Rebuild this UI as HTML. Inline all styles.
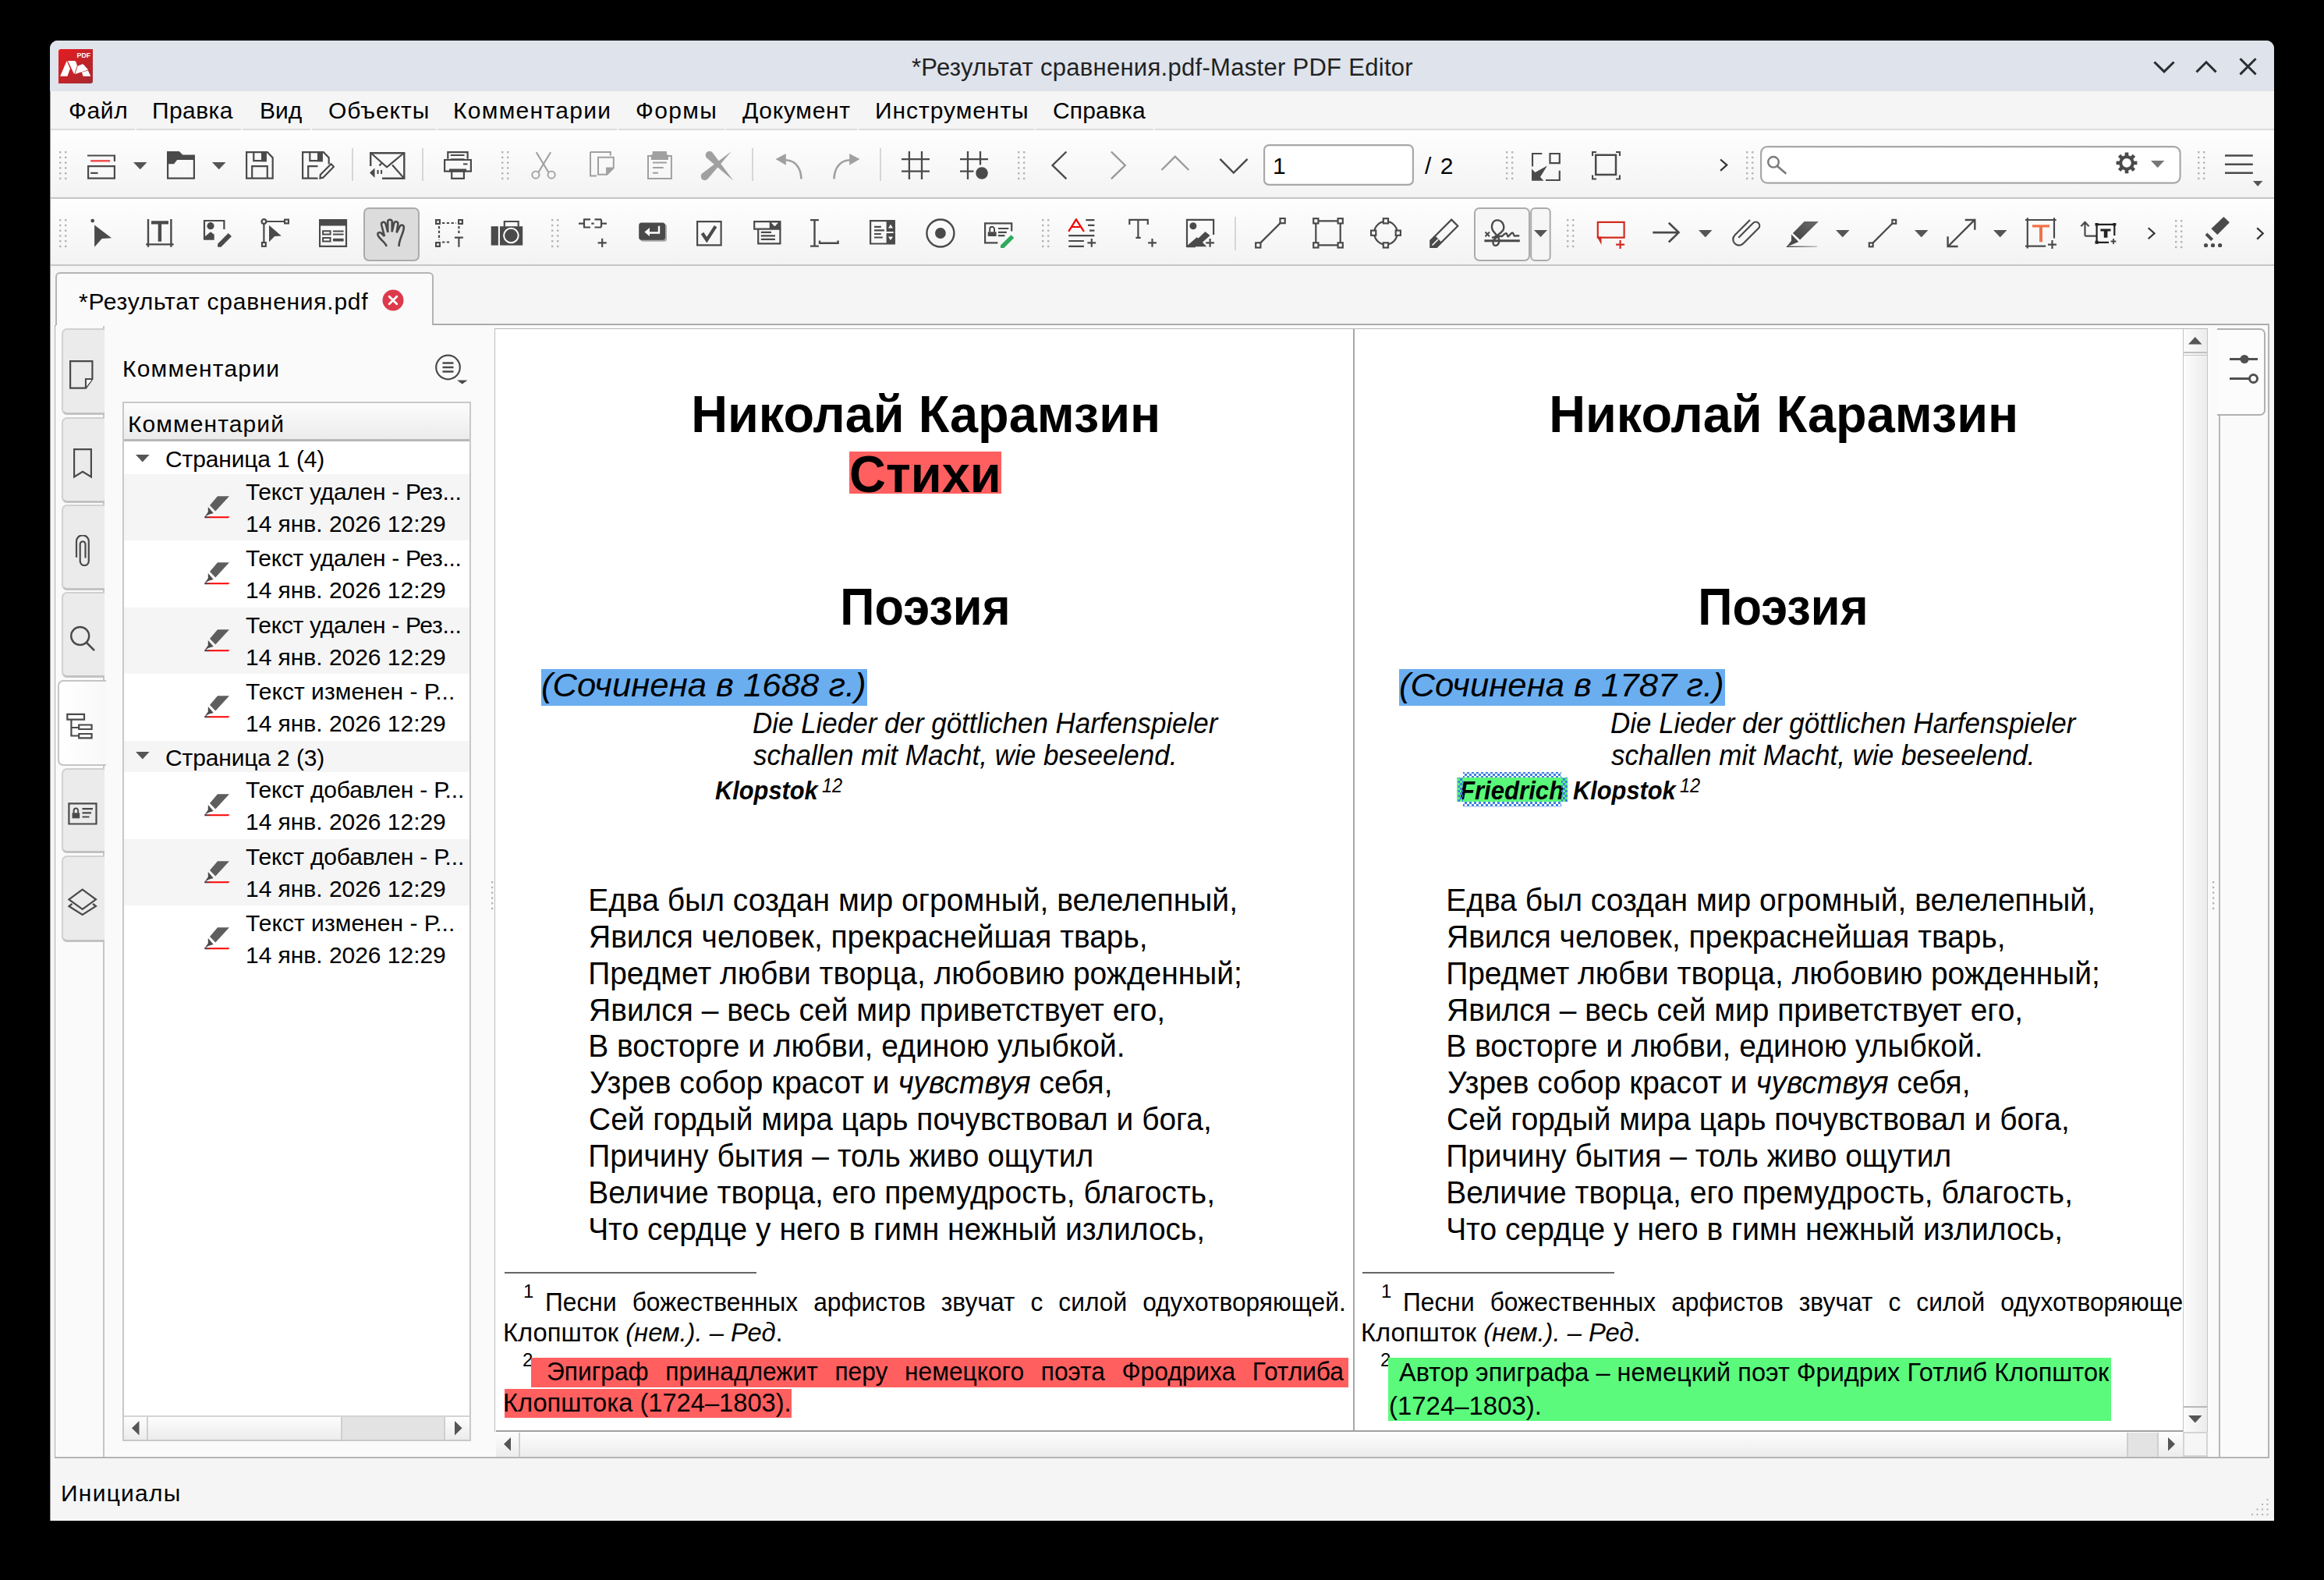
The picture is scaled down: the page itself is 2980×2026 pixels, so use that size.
<!DOCTYPE html><html><head><meta charset="utf-8"><style>
html,body{margin:0;padding:0}
body{width:2980px;height:2026px;background:#000;position:relative;overflow:hidden;font-family:"Liberation Sans",sans-serif}
.a{position:absolute;display:block}
.t{position:absolute;white-space:pre;}
</style></head><body>
<div class="a" style="left:64px;top:52px;width:2852px;height:1898px;background:#f5f5f5;border-radius:10px 10px 0 0;"></div>
<div class="a" style="left:64px;top:52px;width:2852px;height:65px;background:#dee3ec;border-radius:10px 10px 0 0;"></div>
<svg class="a" style="left:75px;top:63px" width="44" height="44" viewBox="0 0 44 44"><defs><linearGradient id="lg" x1="0" y1="0" x2="1" y2="1"><stop offset="0" stop-color="#e61c20"/><stop offset="1" stop-color="#a52a30"/></linearGradient></defs><path d="M3 0H44V41A3 3 0 0 1 41 44H0V3A3 3 0 0 1 3 0Z" fill="url(#lg)"/><text x="41.2" y="11.3" font-family="Liberation Sans" font-weight="700" font-size="8.8" fill="#fff" text-anchor="end">PDF</text><path d="M2.1 34.8L10.4 15.6L10.9 15.6L14.9 25.3L11.4 34.8Z" fill="#fff"/><path d="M11.9 15H20.3Q22 15 22.6 16.8L23.9 21.3L20.4 31.4Q20 31.6 19.7 31.2Z" fill="#fff"/><path d="M24.6 21.8L30.5 19.2Q31.5 19 32.3 20L38.1 26.5L21.2 31.9Z" fill="#fff"/><path d="M30 29.4L37.9 27.6L41.3 34.8H31.5Z" fill="#fff"/></svg>
<div class="t" style="left:1169.0px;top:71px;font-size:31px;line-height:31px;color:#222;letter-spacing:0.293px;">*Результат сравнения.pdf-Master PDF Editor</div>
<svg class="a" style="left:2758px;top:74px" width="140" height="26" viewBox="0 0 140 26"><path d="M5.5 6.5L17 17.8L28.5 6.5" fill="none" stroke="#2a2e33" stroke-width="3" stroke-linecap="square"/><path d="M59.5 17.3L71 5.8L82.5 17.3" fill="none" stroke="#2a2e33" stroke-width="3" stroke-linecap="square"/><path d="M115.5 2.3L133.5 20.3M133.5 2.3L115.5 20.3" fill="none" stroke="#2a2e33" stroke-width="3" stroke-linecap="square"/></svg>
<div class="a" style="left:64px;top:117px;width:2852px;height:50px;background:#f5f5f5;"></div>
<div class="a" style="left:64px;top:165px;width:2852px;height:2px;background:#dcdcdc;"></div>
<div class="a" style="left:173px;top:165px;width:2px;height:2px;background:#f5f5f5;"></div>
<div class="a" style="left:309px;top:165px;width:2px;height:2px;background:#f5f5f5;"></div>
<div class="a" style="left:398px;top:165px;width:2px;height:2px;background:#f5f5f5;"></div>
<div class="a" style="left:559px;top:165px;width:2px;height:2px;background:#f5f5f5;"></div>
<div class="a" style="left:791px;top:165px;width:2px;height:2px;background:#f5f5f5;"></div>
<div class="a" style="left:929px;top:165px;width:2px;height:2px;background:#f5f5f5;"></div>
<div class="a" style="left:1099px;top:165px;width:2px;height:2px;background:#f5f5f5;"></div>
<div class="a" style="left:1326px;top:165px;width:2px;height:2px;background:#f5f5f5;"></div>
<div class="a" style="left:1479px;top:165px;width:2px;height:2px;background:#f5f5f5;"></div>
<div class="t" style="left:88.0px;top:127px;font-size:30px;line-height:30px;letter-spacing:0.667px;">Файл</div>
<div class="t" style="left:195.0px;top:127px;font-size:30px;line-height:30px;letter-spacing:0.400px;">Правка</div>
<div class="t" style="left:333.0px;top:127px;font-size:30px;line-height:30px;">Вид</div>
<div class="t" style="left:421.0px;top:127px;font-size:30px;line-height:30px;letter-spacing:0.917px;">Объекты</div>
<div class="t" style="left:581.0px;top:127px;font-size:30px;line-height:30px;letter-spacing:1.300px;">Комментарии</div>
<div class="t" style="left:815.0px;top:127px;font-size:30px;line-height:30px;letter-spacing:1.375px;">Формы</div>
<div class="t" style="left:952.0px;top:127px;font-size:30px;line-height:30px;letter-spacing:0.714px;">Документ</div>
<div class="t" style="left:1122.0px;top:127px;font-size:30px;line-height:30px;letter-spacing:0.960px;">Инструменты</div>
<div class="t" style="left:1350.0px;top:127px;font-size:30px;line-height:30px;letter-spacing:0.167px;">Справка</div>
<div class="a" style="left:64px;top:167px;width:2852px;height:87px;background:linear-gradient(#fefefe,#f3f3f3);"></div>
<div class="a" style="left:64px;top:253px;width:2852px;height:2px;background:#c6c6c6;"></div>
<div class="a" style="left:64px;top:255px;width:2852px;height:84px;background:linear-gradient(#fefefe,#f3f3f3);"></div>
<div class="a" style="left:64px;top:339px;width:2852px;height:2px;background:#c6c6c6;"></div>
<svg class="a" style="left:75.8px;top:193.8px" width="10" height="38" viewBox="0 0 10 38"><rect x="0" y="0.00" width="2.4" height="2.4" fill="#b4b4b4"/><rect x="7" y="0.00" width="2.4" height="2.4" fill="#b4b4b4"/><rect x="0" y="6.75" width="2.4" height="2.4" fill="#b4b4b4"/><rect x="7" y="6.75" width="2.4" height="2.4" fill="#b4b4b4"/><rect x="0" y="13.50" width="2.4" height="2.4" fill="#b4b4b4"/><rect x="7" y="13.50" width="2.4" height="2.4" fill="#b4b4b4"/><rect x="0" y="20.25" width="2.4" height="2.4" fill="#b4b4b4"/><rect x="7" y="20.25" width="2.4" height="2.4" fill="#b4b4b4"/><rect x="0" y="27.00" width="2.4" height="2.4" fill="#b4b4b4"/><rect x="7" y="27.00" width="2.4" height="2.4" fill="#b4b4b4"/><rect x="0" y="33.75" width="2.4" height="2.4" fill="#b4b4b4"/><rect x="7" y="33.75" width="2.4" height="2.4" fill="#b4b4b4"/></svg>
<svg class="a" style="left:112px;top:194px" width="36" height="36" viewBox="0 0 36 36"><path d="M0 5.5H34.9V13" fill="none" stroke="#4a4a4a" stroke-width="2.2" /><path d="M4.2 12.3H29.2" fill="none" stroke="#f04848" stroke-width="2.4" /><path d="M1.1 19.1H34.9V34.7H1.1Z" fill="none" stroke="#4a4a4a" stroke-width="2.2" /><path d="M4.2 27.9H13.5" fill="none" stroke="#4a4a4a" stroke-width="2.2" /></svg>
<svg class="a" style="left:171px;top:208px" width="17.5" height="9.3" viewBox="0 0 17.5 9.3"><path d="M0 0H17.5L8.75 9.3Z" fill="#555" /></svg>
<svg class="a" style="left:214px;top:194px" width="36" height="36" viewBox="0 0 36 36"><path d="M0 0H15.8L20.3 4.5H36V35.8H0Z M2.2 16.2H9.1L13.2 11.1H33.8V33.6H2.2Z" fill="#4a4a4a" fill-rule="evenodd"/></svg>
<svg class="a" style="left:272px;top:208px" width="17.5" height="9.3" viewBox="0 0 17.5 9.3"><path d="M0 0H17.5L8.75 9.3Z" fill="#555" /></svg>
<svg class="a" style="left:315px;top:194px" width="36" height="36" viewBox="0 0 36 36"><path d="M0 0H28.3L35.8 7.8V35.8H0Z M2.2 2.2H27.4L33.6 8.7V33.6H2.2Z" fill="#4a4a4a" fill-rule="evenodd"/><path d="M10.3 1V12.2H25.7V1" fill="none" stroke="#4a4a4a" stroke-width="2.2" /><path d="M20 1H26.7V13.2H20Z" fill="#4a4a4a" /><path d="M8.2 34.7V19.1H27.8V34.7" fill="none" stroke="#4a4a4a" stroke-width="2.2" /></svg>
<svg class="a" style="left:387px;top:194px" width="42" height="36" viewBox="0 0 42 36"><path d="M0 0H28.3L35.8 7.8V16.5H33.6V8.7L27.4 2.2H2.2V33.6H20.5V35.8H0Z" fill="#4a4a4a" /><path d="M10.3 1V12.2H25.7V1" fill="none" stroke="#4a4a4a" stroke-width="2.2" /><path d="M20 1H26.7V13.2H20Z" fill="#4a4a4a" /><path d="M8.2 34.7V19.1H20.5" fill="none" stroke="#4a4a4a" stroke-width="2.2" /><path d="M23.5 34.5L23.8 30L37.5 16.2L41 19.8L27.3 33.7Z" fill="none" stroke="#4a4a4a" stroke-width="2.2" /></svg>
<svg class="a" style="left:451px;top:190px" width="2" height="42" viewBox="0 0 2 42"><rect x="0" y="0" width="2" height="42" fill="#d6d6d6"/></svg>
<svg class="a" style="left:474px;top:195px" width="46" height="35" viewBox="0 0 46 35"><path d="M1.2 18V1.2H44.3V33.7H16" fill="none" stroke="#4a4a4a" stroke-width="2.4" /><path d="M2 1.5L22 19.3L43.5 1.5" fill="none" stroke="#4a4a4a" stroke-width="2.2" /><path d="M43.5 33L29 16.5" fill="none" stroke="#4a4a4a" stroke-width="2.2" /><path d="M12.5 17.5L15 14.5" fill="none" stroke="#4a4a4a" stroke-width="2.2" /><path d="M0 26.5L6.5 20.5V33Z" fill="#4a4a4a" /><path d="M9.5 23H11.6V28H9.5Z M14 23H16.1V28H14Z" fill="#4a4a4a" /></svg>
<svg class="a" style="left:541px;top:190px" width="2" height="42" viewBox="0 0 2 42"><rect x="0" y="0" width="2" height="42" fill="#d6d6d6"/></svg>
<svg class="a" style="left:569px;top:194px" width="36" height="36" viewBox="0 0 36 36"><path d="M5.3 9.8V1.1H30.6V9.8" fill="none" stroke="#4a4a4a" stroke-width="2.2" /><path d="M8.8 5H26.5" fill="none" stroke="#4a4a4a" stroke-width="2" /><path d="M8.8 9.3H26.5V11.5H8.8Z" fill="#4a4a4a" /><path d="M1.1 11H34.9V25.6H1.1Z" fill="none" stroke="#4a4a4a" stroke-width="2.2" /><path d="M25 16.4H30.5" fill="none" stroke="#4a4a4a" stroke-width="2" /><path d="M7 22.5H29V26.5H7Z" fill="#4a4a4a" /><path d="M10.2 25.5V34.9H25.9V25.5" fill="none" stroke="#4a4a4a" stroke-width="2.2" /></svg>
<svg class="a" style="left:642.8px;top:193.8px" width="10" height="38" viewBox="0 0 10 38"><rect x="0" y="0.00" width="2.4" height="2.4" fill="#b4b4b4"/><rect x="7" y="0.00" width="2.4" height="2.4" fill="#b4b4b4"/><rect x="0" y="6.75" width="2.4" height="2.4" fill="#b4b4b4"/><rect x="7" y="6.75" width="2.4" height="2.4" fill="#b4b4b4"/><rect x="0" y="13.50" width="2.4" height="2.4" fill="#b4b4b4"/><rect x="7" y="13.50" width="2.4" height="2.4" fill="#b4b4b4"/><rect x="0" y="20.25" width="2.4" height="2.4" fill="#b4b4b4"/><rect x="7" y="20.25" width="2.4" height="2.4" fill="#b4b4b4"/><rect x="0" y="27.00" width="2.4" height="2.4" fill="#b4b4b4"/><rect x="7" y="27.00" width="2.4" height="2.4" fill="#b4b4b4"/><rect x="0" y="33.75" width="2.4" height="2.4" fill="#b4b4b4"/><rect x="7" y="33.75" width="2.4" height="2.4" fill="#b4b4b4"/></svg>
<svg class="a" style="left:681px;top:194px" width="32" height="36" viewBox="0 0 32 36"><path d="M6.7 1.2L22.1 26.5M25.1 1.2L9.7 26.5" fill="none" stroke="#a0a0a0" stroke-width="2.1" /><circle cx="5.9" cy="30.2" r="4.6" fill="none" stroke="#a0a0a0" stroke-width="1.9"/><circle cx="26.1" cy="30.2" r="4.6" fill="none" stroke="#a0a0a0" stroke-width="1.9"/></svg>
<svg class="a" style="left:756px;top:194px" width="32" height="36" viewBox="0 0 32 36"><path d="M1 1H26.8V5.5M9 31.4H1V1" fill="none" stroke="#a0a0a0" stroke-width="2" /><path d="M10 6.7H31.8V21.8L22.7 30.8H10Z M12 8.7H29.8V20.8H21.2V28.8H12Z" fill="#a0a0a0" fill-rule="evenodd"/><path d="M21.2 20.8H29.8L21.2 29.2Z" fill="#a0a0a0" /></svg>
<svg class="a" style="left:830px;top:194px" width="32" height="36" viewBox="0 0 32 36"><path d="M1 6H30.9V35H1Z" fill="none" stroke="#a0a0a0" stroke-width="2" /><path d="M6.7 0H24.9V4.3H26.9V10.9H4.9V4.3H6.7Z" fill="#a0a0a0" /><path d="M7 14.5H25M7 21.1H20.7M7 27.7H14" fill="none" stroke="#a0a0a0" stroke-width="2" /></svg>
<svg class="a" style="left:899px;top:194px" width="42" height="38" viewBox="0 0 42 38"><path d="M1.2 28.4L39 0L8.2 35.8A5 5 0 0 1 1.2 28.4Z" fill="#a0a0a0" /><path d="M14.5 1.4L41.5 37.7L7.1 8.4A5 5 0 0 1 14.5 1.4Z" fill="#a0a0a0" /></svg>
<svg class="a" style="left:964px;top:190px" width="2" height="42" viewBox="0 0 2 42"><rect x="0" y="0" width="2" height="42" fill="#d6d6d6"/></svg>
<svg class="a" style="left:994px;top:197px" width="35" height="33" viewBox="0 0 35 33"><path d="M0.5 7.1L13.8 0V14.8Z" fill="#a0a0a0" /><path d="M13.2 8.2C24 8.5 33 16 33.5 32.5" fill="none" stroke="#a0a0a0" stroke-width="2.6" /></svg>
<svg class="a" style="left:1068px;top:197px" width="35" height="33" viewBox="0 0 35 33"><path d="M34.5 7.1L21.2 0V14.8Z" fill="#a0a0a0" /><path d="M21.8 8.2C11 8.5 2 16 1.5 32.5" fill="none" stroke="#a0a0a0" stroke-width="2.6" /></svg>
<svg class="a" style="left:1128px;top:190px" width="2" height="42" viewBox="0 0 2 42"><rect x="0" y="0" width="2" height="42" fill="#d6d6d6"/></svg>
<svg class="a" style="left:1156px;top:194px" width="36" height="36" viewBox="0 0 36 36"><path d="M9.9 0V36M26 0V36M0 10.1H36M0 25.6H36" fill="none" stroke="#4a4a4a" stroke-width="2.3" /></svg>
<svg class="a" style="left:1231px;top:194px" width="36" height="36" viewBox="0 0 36 36"><path d="M10 0V36M26 0V17.5M0 10.1H36M0 25.6H17.5" fill="none" stroke="#4a4a4a" stroke-width="2.3" /><circle cx="28" cy="28" r="7.8" fill="#4a4a4a"/></svg>
<svg class="a" style="left:1304.8px;top:193.8px" width="10" height="38" viewBox="0 0 10 38"><rect x="0" y="0.00" width="2.4" height="2.4" fill="#b4b4b4"/><rect x="7" y="0.00" width="2.4" height="2.4" fill="#b4b4b4"/><rect x="0" y="6.75" width="2.4" height="2.4" fill="#b4b4b4"/><rect x="7" y="6.75" width="2.4" height="2.4" fill="#b4b4b4"/><rect x="0" y="13.50" width="2.4" height="2.4" fill="#b4b4b4"/><rect x="7" y="13.50" width="2.4" height="2.4" fill="#b4b4b4"/><rect x="0" y="20.25" width="2.4" height="2.4" fill="#b4b4b4"/><rect x="7" y="20.25" width="2.4" height="2.4" fill="#b4b4b4"/><rect x="0" y="27.00" width="2.4" height="2.4" fill="#b4b4b4"/><rect x="7" y="27.00" width="2.4" height="2.4" fill="#b4b4b4"/><rect x="0" y="33.75" width="2.4" height="2.4" fill="#b4b4b4"/><rect x="7" y="33.75" width="2.4" height="2.4" fill="#b4b4b4"/></svg>
<svg class="a" style="left:1345px;top:192px" width="26" height="40" viewBox="0 0 26 40"><path d="M22.4 2.5L4.6 20L22.4 37.4" fill="none" stroke="#4a4a4a" stroke-width="2.4" /></svg>
<svg class="a" style="left:1421px;top:192px" width="26" height="40" viewBox="0 0 26 40"><path d="M3.9 2.5L21.7 20L3.9 37.4" fill="none" stroke="#9a9a9a" stroke-width="2.4" /></svg>
<svg class="a" style="left:1486px;top:197px" width="42" height="24" viewBox="0 0 42 24"><path d="M3.5 21L20.8 3.6L38.3 21" fill="none" stroke="#9a9a9a" stroke-width="2.4" /></svg>
<svg class="a" style="left:1561px;top:200px" width="42" height="24" viewBox="0 0 42 24"><path d="M3.4 3.9L20.8 21.5L38.6 3.9" fill="none" stroke="#4a4a4a" stroke-width="2.4" /></svg>
<svg class="a" style="left:1620px;top:185px" width="193" height="53" viewBox="0 0 193 53"><rect x="1.1" y="1.1" width="190.8" height="50.8" rx="6" fill="#fff" stroke="#a8a8a8" stroke-width="2.2"/></svg>
<svg class="a" style="left:1930.8px;top:193.8px" width="10" height="38" viewBox="0 0 10 38"><rect x="0" y="0.00" width="2.4" height="2.4" fill="#b4b4b4"/><rect x="7" y="0.00" width="2.4" height="2.4" fill="#b4b4b4"/><rect x="0" y="6.75" width="2.4" height="2.4" fill="#b4b4b4"/><rect x="7" y="6.75" width="2.4" height="2.4" fill="#b4b4b4"/><rect x="0" y="13.50" width="2.4" height="2.4" fill="#b4b4b4"/><rect x="7" y="13.50" width="2.4" height="2.4" fill="#b4b4b4"/><rect x="0" y="20.25" width="2.4" height="2.4" fill="#b4b4b4"/><rect x="7" y="20.25" width="2.4" height="2.4" fill="#b4b4b4"/><rect x="0" y="27.00" width="2.4" height="2.4" fill="#b4b4b4"/><rect x="7" y="27.00" width="2.4" height="2.4" fill="#b4b4b4"/><rect x="0" y="33.75" width="2.4" height="2.4" fill="#b4b4b4"/><rect x="7" y="33.75" width="2.4" height="2.4" fill="#b4b4b4"/></svg>
<svg class="a" style="left:1964px;top:196px" width="37" height="37" viewBox="0 0 37 37"><path d="M1 17.5V1H13.4" fill="none" stroke="#4a4a4a" stroke-width="2.2" /><path d="M23.5 1H35.8V13.2H23.5Z" fill="none" stroke="#4a4a4a" stroke-width="2.2" /><path d="M18 35H35.8V22.7" fill="none" stroke="#4a4a4a" stroke-width="2.2" /><path d="M0 20.5L4.5 25L20 16.4L11 31L15.5 35.8H0Z" fill="#4a4a4a" /></svg>
<svg class="a" style="left:2041px;top:194px" width="37" height="37" viewBox="0 0 37 37"><path d="M1 6V1H6M31 1H36V6M36 30.5V35.5H31M6 35.5H1V30.5" fill="none" stroke="#4a4a4a" stroke-width="2.2" /><path d="M5.2 4.8H31V30.1H5.2Z" fill="none" stroke="#4a4a4a" stroke-width="2.5" /></svg>
<svg class="a" style="left:2203px;top:202px" width="14" height="20" viewBox="0 0 14 20"><path d="M3.1 2.5L11.3 9.6L3.1 16.9" fill="none" stroke="#333" stroke-width="2.2" /></svg>
<svg class="a" style="left:2238.8px;top:193.8px" width="10" height="38" viewBox="0 0 10 38"><rect x="0" y="0.00" width="2.4" height="2.4" fill="#b4b4b4"/><rect x="7" y="0.00" width="2.4" height="2.4" fill="#b4b4b4"/><rect x="0" y="6.75" width="2.4" height="2.4" fill="#b4b4b4"/><rect x="7" y="6.75" width="2.4" height="2.4" fill="#b4b4b4"/><rect x="0" y="13.50" width="2.4" height="2.4" fill="#b4b4b4"/><rect x="7" y="13.50" width="2.4" height="2.4" fill="#b4b4b4"/><rect x="0" y="20.25" width="2.4" height="2.4" fill="#b4b4b4"/><rect x="7" y="20.25" width="2.4" height="2.4" fill="#b4b4b4"/><rect x="0" y="27.00" width="2.4" height="2.4" fill="#b4b4b4"/><rect x="7" y="27.00" width="2.4" height="2.4" fill="#b4b4b4"/><rect x="0" y="33.75" width="2.4" height="2.4" fill="#b4b4b4"/><rect x="7" y="33.75" width="2.4" height="2.4" fill="#b4b4b4"/></svg>
<svg class="a" style="left:2257px;top:187px" width="540" height="49" viewBox="0 0 540 49"><rect x="1.1" y="1.1" width="537.5" height="46.5" rx="8" fill="#fff" stroke="#a8a8a8" stroke-width="2.2"/></svg>
<svg class="a" style="left:2262px;top:196px" width="35" height="32" viewBox="0 0 35 32"><circle cx="12" cy="11.8" r="6.8" fill="none" stroke="#7a7a7a" stroke-width="2.4"/><path d="M17 17L28.3 26.8" fill="none" stroke="#7a7a7a" stroke-width="2.6" /></svg>
<svg class="a" style="left:2713px;top:195px" width="28" height="28" viewBox="0 0 28 28"><g transform="translate(14 13.9)"><rect x="-2.3" y="-13.4" width="4.6" height="6" fill="#4a4a4a" transform="rotate(0)"/><rect x="-2.3" y="-13.4" width="4.6" height="6" fill="#4a4a4a" transform="rotate(45)"/><rect x="-2.3" y="-13.4" width="4.6" height="6" fill="#4a4a4a" transform="rotate(90)"/><rect x="-2.3" y="-13.4" width="4.6" height="6" fill="#4a4a4a" transform="rotate(135)"/><rect x="-2.3" y="-13.4" width="4.6" height="6" fill="#4a4a4a" transform="rotate(180)"/><rect x="-2.3" y="-13.4" width="4.6" height="6" fill="#4a4a4a" transform="rotate(225)"/><rect x="-2.3" y="-13.4" width="4.6" height="6" fill="#4a4a4a" transform="rotate(270)"/><rect x="-2.3" y="-13.4" width="4.6" height="6" fill="#4a4a4a" transform="rotate(315)"/><circle cx="0" cy="0" r="7.8" fill="none" stroke="#4a4a4a" stroke-width="4"/></g></svg>
<svg class="a" style="left:2758px;top:206px" width="17.3" height="9.1" viewBox="0 0 17.3 9.1"><path d="M0 0H17.3L8.65 9.1Z" fill="#777" /></svg>
<svg class="a" style="left:2817.8px;top:193.8px" width="10" height="38" viewBox="0 0 10 38"><rect x="0" y="0.00" width="2.4" height="2.4" fill="#b4b4b4"/><rect x="7" y="0.00" width="2.4" height="2.4" fill="#b4b4b4"/><rect x="0" y="6.75" width="2.4" height="2.4" fill="#b4b4b4"/><rect x="7" y="6.75" width="2.4" height="2.4" fill="#b4b4b4"/><rect x="0" y="13.50" width="2.4" height="2.4" fill="#b4b4b4"/><rect x="7" y="13.50" width="2.4" height="2.4" fill="#b4b4b4"/><rect x="0" y="20.25" width="2.4" height="2.4" fill="#b4b4b4"/><rect x="7" y="20.25" width="2.4" height="2.4" fill="#b4b4b4"/><rect x="0" y="27.00" width="2.4" height="2.4" fill="#b4b4b4"/><rect x="7" y="27.00" width="2.4" height="2.4" fill="#b4b4b4"/><rect x="0" y="33.75" width="2.4" height="2.4" fill="#b4b4b4"/><rect x="7" y="33.75" width="2.4" height="2.4" fill="#b4b4b4"/></svg>
<svg class="a" style="left:2853px;top:197px" width="36" height="27" viewBox="0 0 36 27"><path d="M0 2.4H35.8M0 13.8H35.8M0 24.8H35.8" fill="none" stroke="#4a4a4a" stroke-width="2.5" /></svg>
<svg class="a" style="left:2889px;top:232px" width="12.2" height="7" viewBox="0 0 12.2 7"><path d="M0 0H12.2L6.1 7Z" fill="#555" /></svg>
<svg class="a" style="left:75.8px;top:280.8px" width="10" height="38" viewBox="0 0 10 38"><rect x="0" y="0.00" width="2.4" height="2.4" fill="#b4b4b4"/><rect x="7" y="0.00" width="2.4" height="2.4" fill="#b4b4b4"/><rect x="0" y="6.75" width="2.4" height="2.4" fill="#b4b4b4"/><rect x="7" y="6.75" width="2.4" height="2.4" fill="#b4b4b4"/><rect x="0" y="13.50" width="2.4" height="2.4" fill="#b4b4b4"/><rect x="7" y="13.50" width="2.4" height="2.4" fill="#b4b4b4"/><rect x="0" y="20.25" width="2.4" height="2.4" fill="#b4b4b4"/><rect x="7" y="20.25" width="2.4" height="2.4" fill="#b4b4b4"/><rect x="0" y="27.00" width="2.4" height="2.4" fill="#b4b4b4"/><rect x="7" y="27.00" width="2.4" height="2.4" fill="#b4b4b4"/><rect x="0" y="33.75" width="2.4" height="2.4" fill="#b4b4b4"/><rect x="7" y="33.75" width="2.4" height="2.4" fill="#b4b4b4"/></svg>
<svg class="a" style="left:114px;top:279px" width="32" height="40" viewBox="0 0 32 40"><circle cx="4.7" cy="4.1" r="2.4" fill="#4a4a4a"/><path d="M7.1 9.4L29.1 26.3L16.7 27L7.1 37.7Z" fill="#4a4a4a" /></svg>
<svg class="a" style="left:186px;top:280px" width="38" height="38" viewBox="0 0 38 38"><path d="M4 0.9V36.7M33.4 0.9V36.7M1.1 33.4H36.7" fill="none" stroke="#4a4a4a" stroke-width="2.4" /><path d="M8 3.3H30V7.6H21.1V29.7H16.7V7.6H8Z" fill="#4a4a4a" /></svg>
<svg class="a" style="left:260px;top:281px" width="38" height="37" viewBox="0 0 38 37"><path d="M2 26V2H27.4V13" fill="none" stroke="#4a4a4a" stroke-width="2.2" /><circle cx="10" cy="8.7" r="4.6" fill="#4a4a4a"/><path d="M1.1 23.7L10 16.3L14.7 19.7V26.7H1.1Z" fill="#4a4a4a" /><path d="M19.1 31.7L32.7 18.1L37 22L23.4 35.7H19.1Z" fill="#4a4a4a" /></svg>
<svg class="a" style="left:332px;top:280px" width="40" height="38" viewBox="0 0 40 38"><path d="M6.4 4V33.4M6.4 4H35.5" fill="none" stroke="#4a4a4a" stroke-width="2.2" /><circle cx="6.4" cy="4" r="2.9" fill="#fff" stroke="#4a4a4a" stroke-width="2.2"/><rect x="33.10" y="1.60" width="4.80" height="4.80" fill="#fff" stroke="#4a4a4a" stroke-width="2.2"/><rect x="4.00" y="31.00" width="4.80" height="4.80" fill="#fff" stroke="#4a4a4a" stroke-width="2.2"/><path d="M13 8.7L28.8 22.4L20.1 23.1L13 30.3Z" fill="#4a4a4a" /></svg>
<svg class="a" style="left:409px;top:281px" width="37" height="37" viewBox="0 0 37 37"><path d="M1 1H35V34.8H1Z" fill="none" stroke="#4a4a4a" stroke-width="2.2" /><path d="M0 0H36V8.5H0Z" fill="#4a4a4a" /><path d="M5.1 15.3H14.6V19.6H5.1Z M5.1 23.9H14.6V28.4H5.1Z" fill="none" stroke="#4a4a4a" stroke-width="2" /><path d="M18 15.5H31.6M18 19.5H31.6" fill="none" stroke="#4a4a4a" stroke-width="2.2" /><path d="M18 24.8H31.6V28.5H18Z" fill="#4a4a4a" /></svg>
<svg class="a" style="left:466px;top:266px" width="72" height="69" viewBox="0 0 72 69"><rect x="1" y="1" width="70" height="67" rx="6" fill="#dcdcdc" stroke="#ababab" stroke-width="2"/></svg>
<svg class="a" style="left:482px;top:280px" width="39" height="38" viewBox="0 0 39 38"><path d="M13.6 36C13 31 5 27.5 2.6 21.5C1.6 18.5 4.5 16.8 7 19L11 23 M11 23L7.2 8.5C6.4 4.3 11.6 3.3 12.6 7.3L15.3 18 M15.3 18L15.2 4.3C15.2 0.8 20.7 0.8 20.7 4.3V17.5 M20.7 17L23.1 6.7C24 3 28.8 3.7 28.3 7.6L26.6 18.5 M26.6 18.5L30.5 10.5C32 7.5 36.3 8.3 35.8 12.5C35 20.5 29.3 27.5 29.6 36" fill="none" stroke="#4a4a4a" stroke-width="2.6" /></svg>
<svg class="a" style="left:557px;top:280px" width="38" height="38" viewBox="0 0 38 38"><rect x="2.10" y="2.10" width="4.80" height="4.80" fill="#fff" stroke="#4a4a4a" stroke-width="2.2"/><rect x="31.10" y="2.10" width="4.80" height="4.80" fill="#fff" stroke="#4a4a4a" stroke-width="2.2"/><rect x="2.10" y="31.10" width="4.80" height="4.80" fill="#fff" stroke="#4a4a4a" stroke-width="2.2"/><path d="M10 6H28" fill="none" stroke="#4a4a4a" stroke-width="2.2" stroke-dasharray="3.3 2.5"/><path d="M6 10V28" fill="none" stroke="#4a4a4a" stroke-width="2.2" stroke-dasharray="3.3 2.5"/><path d="M31.4 10V20" fill="none" stroke="#4a4a4a" stroke-width="2.2" stroke-dasharray="3.3 2.5"/><path d="M10 30.5H21" fill="none" stroke="#4a4a4a" stroke-width="2.2" stroke-dasharray="3.3 2.5"/><path d="M25.9 24.7H36.9M31.4 24.7V36.8" fill="none" stroke="#4a4a4a" stroke-width="2.2" /></svg>
<svg class="a" style="left:629px;top:282px" width="42" height="34" viewBox="0 0 42 34"><path d="M0.7 8.2H9.9V32.6H0.7Z" fill="#4a4a4a" /><path d="M12 8.2H41.2V32.6H12Z" fill="#4a4a4a" /><path d="M17.8 8.5V2H35.7V8.5" fill="none" stroke="#4a4a4a" stroke-width="2.2" /><circle cx="26.4" cy="20" r="9.3" fill="#4a4a4a" stroke="#fff" stroke-width="2"/></svg>
<svg class="a" style="left:706.8px;top:280.8px" width="10" height="38" viewBox="0 0 10 38"><rect x="0" y="0.00" width="2.4" height="2.4" fill="#b4b4b4"/><rect x="7" y="0.00" width="2.4" height="2.4" fill="#b4b4b4"/><rect x="0" y="6.75" width="2.4" height="2.4" fill="#b4b4b4"/><rect x="7" y="6.75" width="2.4" height="2.4" fill="#b4b4b4"/><rect x="0" y="13.50" width="2.4" height="2.4" fill="#b4b4b4"/><rect x="7" y="13.50" width="2.4" height="2.4" fill="#b4b4b4"/><rect x="0" y="20.25" width="2.4" height="2.4" fill="#b4b4b4"/><rect x="7" y="20.25" width="2.4" height="2.4" fill="#b4b4b4"/><rect x="0" y="27.00" width="2.4" height="2.4" fill="#b4b4b4"/><rect x="7" y="27.00" width="2.4" height="2.4" fill="#b4b4b4"/><rect x="0" y="33.75" width="2.4" height="2.4" fill="#b4b4b4"/><rect x="7" y="33.75" width="2.4" height="2.4" fill="#b4b4b4"/></svg>
<svg class="a" style="left:740px;top:279px" width="40" height="40" viewBox="0 0 40 40"><path d="M2 7.7H9M9 2.3V12.5M8 2.3H17M8 12.5H17M18.3 7.7H21.6M22.5 2.3H31M22.5 12.5H31M31 2.3V12.5M31 7.7H38" fill="none" stroke="#4a4a4a" stroke-width="2.2" /><path d="M26.6 32.4H37.800000000000004M32.2 26.799999999999997V38.0" fill="none" stroke="#4a4a4a" stroke-width="2.2" /></svg>
<svg class="a" style="left:818px;top:284px" width="38" height="27" viewBox="0 0 38 27"><rect x="3.2" y="3.2" width="33.8" height="22.5" rx="3.5" fill="#a8a8a8"/><rect x="1.2" y="1.5" width="33.8" height="22.3" rx="3.5" fill="#4a4a4a"/><path d="M27 5.7V14.5H14" fill="none" stroke="#fff" stroke-width="2.4" /><path d="M8.4 13.5L15 8V19Z" fill="#fff" /></svg>
<svg class="a" style="left:893px;top:283px" width="33" height="33" viewBox="0 0 33 33"><path d="M1.1 1.1H31.6V31.4H1.1Z" fill="none" stroke="#4a4a4a" stroke-width="2.2" /><path d="M7.5 16L13.3 24.6L24.6 7.2" fill="none" stroke="#4a4a4a" stroke-width="4.2" stroke-linejoin="miter"/></svg>
<svg class="a" style="left:966px;top:283px" width="36" height="31" viewBox="0 0 36 31"><path d="M1.2 1.2H34.4V10.7H1.2Z" fill="none" stroke="#4a4a4a" stroke-width="2.2" /><path d="M20.7 1.2H34.4V10.7H20.7Z" fill="#4a4a4a" /><path d="M22.8 2.5H32L27.4 7.3Z" fill="#fff" /><path d="M6.2 10.7V29.3H34.4V10.7" fill="none" stroke="#4a4a4a" stroke-width="2.2" /><path d="M9.8 14.8H23M9.8 19.3H27.9M9.8 23.9H27.9" fill="none" stroke="#4a4a4a" stroke-width="2.2" /></svg>
<svg class="a" style="left:1038px;top:280px" width="38" height="38" viewBox="0 0 38 38"><path d="M6.5 1.3V36.2M1 2.1H11.9M1 35.6H11.9" fill="none" stroke="#4a4a4a" stroke-width="2.4" /><path d="M13 28.4V31.7H36.6V28.4" fill="none" stroke="#4a4a4a" stroke-width="2.4" /></svg>
<svg class="a" style="left:1115px;top:282px" width="34" height="32" viewBox="0 0 34 32"><path d="M1.1 1.1H31.7V30.5H1.1Z" fill="none" stroke="#4a4a4a" stroke-width="2.2" /><path d="M21.6 1H32.8V15H21.6Z M21.6 17H32.8V31H21.6Z" fill="#4a4a4a" /><path d="M27 5.8L30 10.5H24Z M24 21.5H30L27 26Z" fill="#fff" /><path d="M6 8.9H14.8M6 13.4H18.9M6 18H14.8M6 22.5H16.8" fill="none" stroke="#4a4a4a" stroke-width="2.2" /></svg>
<svg class="a" style="left:1187px;top:280px" width="38" height="38" viewBox="0 0 38 38"><circle cx="18.9" cy="19" r="17.5" fill="none" stroke="#4a4a4a" stroke-width="2.4"/><circle cx="18.9" cy="19" r="6.9" fill="#4a4a4a"/></svg>
<svg class="a" style="left:1261px;top:285px" width="40" height="33" viewBox="0 0 40 33"><path d="M18.4 26.4H2.1V1.4H36.2V11.6" fill="none" stroke="#4a4a4a" stroke-width="2.2" /><path d="M5.7 12.3H16.6V18H5.7Z" fill="#4a4a4a" /><path d="M8.2 12.5V9C8.2 4.8 14 4.8 14 9V12.5" fill="none" stroke="#4a4a4a" stroke-width="2" /><path d="M19 8H32.3M19 12.8H29.8M19 17.1H27.4" fill="none" stroke="#4a4a4a" stroke-width="2.2" /><path d="M22 29.6L35.5 16.2L39.3 20L25.8 33.5H22Z" fill="#2eaa5c" /></svg>
<svg class="a" style="left:1335.8px;top:280.8px" width="10" height="38" viewBox="0 0 10 38"><rect x="0" y="0.00" width="2.4" height="2.4" fill="#b4b4b4"/><rect x="7" y="0.00" width="2.4" height="2.4" fill="#b4b4b4"/><rect x="0" y="6.75" width="2.4" height="2.4" fill="#b4b4b4"/><rect x="7" y="6.75" width="2.4" height="2.4" fill="#b4b4b4"/><rect x="0" y="13.50" width="2.4" height="2.4" fill="#b4b4b4"/><rect x="7" y="13.50" width="2.4" height="2.4" fill="#b4b4b4"/><rect x="0" y="20.25" width="2.4" height="2.4" fill="#b4b4b4"/><rect x="7" y="20.25" width="2.4" height="2.4" fill="#b4b4b4"/><rect x="0" y="27.00" width="2.4" height="2.4" fill="#b4b4b4"/><rect x="7" y="27.00" width="2.4" height="2.4" fill="#b4b4b4"/><rect x="0" y="33.75" width="2.4" height="2.4" fill="#b4b4b4"/><rect x="7" y="33.75" width="2.4" height="2.4" fill="#b4b4b4"/></svg>
<svg class="a" style="left:1369px;top:280px" width="38" height="38" viewBox="0 0 38 38"><path d="M1.2 16.9L10.9 1.3L20.9 16.9M4.6 11H17.3" fill="none" stroke="#f00000" stroke-width="2.2" /><path d="M23.3 2.1H34.4M26 8.9H34.4M28 15.7H34.4M1.2 22.1H34.4M1.2 29H20.9M1.2 35.8H20.9" fill="none" stroke="#4a4a4a" stroke-width="2.2" /><path d="M25.4 31.4H36.2M30.8 26.0V36.8" fill="none" stroke="#4a4a4a" stroke-width="2.2" /></svg>
<svg class="a" style="left:1446px;top:280px" width="38" height="38" viewBox="0 0 38 38"><path d="M2.3 8V1.9H25.8V8M13.4 1.9V25.4M10.4 24.8H16.7" fill="none" stroke="#4a4a4a" stroke-width="2.2" /><path d="M26.1 31.4H36.9M31.5 26.0V36.8" fill="none" stroke="#4a4a4a" stroke-width="2.2" /></svg>
<svg class="a" style="left:1520px;top:280px" width="38" height="38" viewBox="0 0 38 38"><path d="M2 37V1.9H36.1V21M2 36.2H13" fill="none" stroke="#4a4a4a" stroke-width="2.2" /><circle cx="9.9" cy="9.7" r="4.5" fill="#4a4a4a"/><path d="M1 36.2L14.7 24.2L16.5 25.4L25.5 16.9L31.6 22.1L21.9 30.8L27.3 36.2Z" fill="#4a4a4a" /><path d="M26.200000000000003 31.4H37.0M31.6 26.0V36.8" fill="none" stroke="#4a4a4a" stroke-width="2.2" /></svg>
<svg class="a" style="left:1583px;top:278px" width="2" height="43" viewBox="0 0 2 43"><rect x="0" y="0" width="2" height="43" fill="#d6d6d6"/></svg>
<svg class="a" style="left:1607px;top:279px" width="44" height="40" viewBox="0 0 44 40"><path d="M6.3 35.4L37.6 4.1" fill="none" stroke="#4a4a4a" stroke-width="2.2" /><rect x="3.20" y="32.30" width="6.20" height="6.20" fill="#fff" stroke="#4a4a4a" stroke-width="2.2"/><rect x="34.50" y="1.00" width="6.20" height="6.20" fill="#fff" stroke="#4a4a4a" stroke-width="2.2"/></svg>
<svg class="a" style="left:1681px;top:278px" width="44" height="42" viewBox="0 0 44 42"><path d="M6.3 5.3H37.7V36.4H6.3Z" fill="none" stroke="#4a4a4a" stroke-width="2.2" /><rect x="3.20" y="2.20" width="6.20" height="6.20" fill="#fff" stroke="#4a4a4a" stroke-width="2.2"/><rect x="34.60" y="2.20" width="6.20" height="6.20" fill="#fff" stroke="#4a4a4a" stroke-width="2.2"/><rect x="3.20" y="33.30" width="6.20" height="6.20" fill="#fff" stroke="#4a4a4a" stroke-width="2.2"/><rect x="34.60" y="33.30" width="6.20" height="6.20" fill="#fff" stroke="#4a4a4a" stroke-width="2.2"/></svg>
<svg class="a" style="left:1755px;top:278px" width="44" height="42" viewBox="0 0 44 42"><circle cx="21.9" cy="20.7" r="14.8" fill="none" stroke="#4a4a4a" stroke-width="2.2"/><rect x="18.80" y="2.20" width="6.20" height="6.20" fill="#fff" stroke="#4a4a4a" stroke-width="2.2"/><rect x="18.80" y="33.30" width="6.20" height="6.20" fill="#fff" stroke="#4a4a4a" stroke-width="2.2"/><rect x="3.10" y="17.60" width="6.20" height="6.20" fill="#fff" stroke="#4a4a4a" stroke-width="2.2"/><rect x="34.70" y="17.60" width="6.20" height="6.20" fill="#fff" stroke="#4a4a4a" stroke-width="2.2"/></svg>
<svg class="a" style="left:1833px;top:280px" width="38" height="38" viewBox="0 0 38 38"><path d="M28.2 1.6L36.3 9.7L9.2 36.8H1.3V28.4Z" fill="none" stroke="#4a4a4a" stroke-width="2.2" /><path d="M1.3 28.4L7.5 22.4L15 30.3L9.2 36.8H1.3Z" fill="#4a4a4a" /><path d="M3.5 34.5L11 27" fill="none" stroke="#fff" stroke-width="1.6" /></svg>
<svg class="a" style="left:1890px;top:266px" width="72" height="69" viewBox="0 0 72 69"><rect x="1" y="1" width="70" height="67" rx="6" fill="#f6f6f6" stroke="#ababab" stroke-width="2"/></svg>
<svg class="a" style="left:1962px;top:266px" width="27" height="69" viewBox="0 0 27 69"><rect x="1.2" y="1" width="24.5" height="67" rx="5" fill="#f6f6f6" stroke="#ababab" stroke-width="2"/></svg>
<svg class="a" style="left:1967px;top:295px" width="17" height="9" viewBox="0 0 17 9"><path d="M0 0H17L8.5 9Z" fill="#555" /></svg>
<svg class="a" style="left:1900px;top:280px" width="52" height="36" viewBox="0 0 52 36"><path d="M3.4 28.8H48.8" fill="none" stroke="#4a4a4a" stroke-width="3" /><path d="M4.5 17.5L10 23.3M10 17.5L4.5 23.3" fill="none" stroke="#4a4a4a" stroke-width="2" /><path d="M13 25C17 24 24 20 27.5 15C30 9 26 2.4 20 2.4C13 2.4 11.5 11 14.5 16C18 21 24 25 22 31C20.5 36 14.5 36.5 14.5 31C14.5 26 22 22 26 23C28 21 30.5 18.5 31.6 19.2C33 20 32.5 23 33.7 23.3C35 23 37.5 18.5 39.2 18.5C41 18.5 41 22.5 42 22.6C43.5 22.8 46 21.5 48.2 22.6" fill="none" stroke="#4a4a4a" stroke-width="2.4" /></svg>
<svg class="a" style="left:2008.8px;top:280.8px" width="10" height="38" viewBox="0 0 10 38"><rect x="0" y="0.00" width="2.4" height="2.4" fill="#b4b4b4"/><rect x="7" y="0.00" width="2.4" height="2.4" fill="#b4b4b4"/><rect x="0" y="6.75" width="2.4" height="2.4" fill="#b4b4b4"/><rect x="7" y="6.75" width="2.4" height="2.4" fill="#b4b4b4"/><rect x="0" y="13.50" width="2.4" height="2.4" fill="#b4b4b4"/><rect x="7" y="13.50" width="2.4" height="2.4" fill="#b4b4b4"/><rect x="0" y="20.25" width="2.4" height="2.4" fill="#b4b4b4"/><rect x="7" y="20.25" width="2.4" height="2.4" fill="#b4b4b4"/><rect x="0" y="27.00" width="2.4" height="2.4" fill="#b4b4b4"/><rect x="7" y="27.00" width="2.4" height="2.4" fill="#b4b4b4"/><rect x="0" y="33.75" width="2.4" height="2.4" fill="#b4b4b4"/><rect x="7" y="33.75" width="2.4" height="2.4" fill="#b4b4b4"/></svg>
<svg class="a" style="left:2046px;top:282px" width="40" height="37" viewBox="0 0 40 37"><path d="M2.8 2.8H36.6V22.7H2.8Z" fill="none" stroke="#d42a20" stroke-width="2.2" /><path d="M1.7 21.6H7.5V32Z" fill="#d42a20" /><path d="M26.1 31.6H37.1M31.6 26.1V37.1" fill="none" stroke="#d42a20" stroke-width="2.2" /></svg>
<svg class="a" style="left:2118px;top:284px" width="38" height="28" viewBox="0 0 38 28"><path d="M1.3 14.1H34.6M21.8 1.7L34.6 14.1L21.8 26.5" fill="none" stroke="#4a4a4a" stroke-width="2.6" /></svg>
<svg class="a" style="left:2178px;top:295px" width="17.5" height="9.3" viewBox="0 0 17.5 9.3"><path d="M0 0H17.5L8.75 9.3Z" fill="#555" /></svg>
<svg class="a" style="left:2219px;top:280px" width="40" height="38" viewBox="0 0 40 38"><path d="M25 2L5.5 21.5A7.6 7.6 0 0 0 16.3 32.3L35.8 12.8A4.8 4.8 0 0 0 29 6L10.3 24.7" fill="none" stroke="#4a4a4a" stroke-width="2.2" /></svg>
<svg class="a" style="left:2290px;top:283px" width="43" height="35" viewBox="0 0 43 35"><defs><linearGradient id="hg" x1="0" y1="1" x2="1" y2="0"><stop offset="0" stop-color="#444"/><stop offset="1" stop-color="#6a6a6a"/></linearGradient><linearGradient id="hu" x1="0" x2="1"><stop offset="0" stop-color="#444"/><stop offset="1" stop-color="#bbb"/></linearGradient></defs><path d="M23.6 1H41.9L18.1 24.4L8.9 15.9Z" fill="url(#hg)" /><path d="M7 17.6L16.3 26.9L8.9 30.2L0.9 33.4L7 25.8Z" fill="#4a4a4a" /><path d="M0.9 32.5H40.8L39 34H0.9Z" fill="url(#hu)" /></svg>
<svg class="a" style="left:2354px;top:295px" width="17.5" height="9.3" viewBox="0 0 17.5 9.3"><path d="M0 0H17.5L8.75 9.3Z" fill="#555" /></svg>
<svg class="a" style="left:2394px;top:280px" width="40" height="38" viewBox="0 0 40 38"><path d="M5.2 33.9L34.8 4.3" fill="none" stroke="#4a4a4a" stroke-width="2.2" /><rect x="2.80" y="31.50" width="4.80" height="4.80" fill="#fff" stroke="#4a4a4a" stroke-width="2.2"/><rect x="32.40" y="1.90" width="4.80" height="4.80" fill="#fff" stroke="#4a4a4a" stroke-width="2.2"/></svg>
<svg class="a" style="left:2455px;top:295px" width="17.5" height="9.3" viewBox="0 0 17.5 9.3"><path d="M0 0H17.5L8.75 9.3Z" fill="#555" /></svg>
<svg class="a" style="left:2496px;top:280px" width="38" height="38" viewBox="0 0 38 38"><path d="M1.9 36L36.3 1.6" fill="none" stroke="#4a4a4a" stroke-width="2.4" /><path d="M23.7 2H36.3V14.8" fill="none" stroke="#4a4a4a" stroke-width="2.4" /><path d="M1.6 23.3V36H14.6" fill="none" stroke="#4a4a4a" stroke-width="2.4" /></svg>
<svg class="a" style="left:2556px;top:295px" width="17.5" height="9.3" viewBox="0 0 17.5 9.3"><path d="M0 0H17.5L8.75 9.3Z" fill="#555" /></svg>
<svg class="a" style="left:2596px;top:278px" width="43" height="42" viewBox="0 0 43 42"><path d="M3.8 1.2V40.5M1 4H40.7M38 1.2V27.4M1 37.7H27.2" fill="none" stroke="#4a4a4a" stroke-width="2.2" /><path d="M10 10.2H32V13.6H23V32.2H19V13.6H10Z" fill="#f27249" /><path d="M30.0 35.6H41.0M35.5 30.1V41.1" fill="none" stroke="#4a4a4a" stroke-width="2.2" /></svg>
<svg class="a" style="left:2667px;top:283px" width="48" height="32" viewBox="0 0 48 32"><path d="M6.5 19.6V2.2M1.4 7.2L6.5 1.8L11.6 7.2M6.5 19.6H21.6" fill="none" stroke="#4a4a4a" stroke-width="2.2" /><path d="M21.6 4.9H44.3M21.6 4.9V27.9M44.3 4.9V19M21.6 27.9H37" fill="none" stroke="#222" stroke-width="2.2" /><path d="M19.5 3H23.7V6.6H19.5Z M42.3 3H46.4V6.6H42.3Z M19.5 25.8H23.7V29.7H19.5Z" fill="#222" /><path d="M26.4 10.4H39.5V13.4H35.4V21.7H30.8V13.4H26.4Z" fill="#222" /><path d="M39.6 26.5H46.4M43 23.1V29.9" fill="none" stroke="#444" stroke-width="1.8" /></svg>
<svg class="a" style="left:2751px;top:289px" width="14" height="20" viewBox="0 0 14 20"><path d="M3.7 3.3L11.5 10.2L3.7 17.3" fill="none" stroke="#333" stroke-width="2.2" /></svg>
<svg class="a" style="left:2788.8px;top:281.8px" width="10" height="38" viewBox="0 0 10 38"><rect x="0" y="0.00" width="2.4" height="2.4" fill="#b4b4b4"/><rect x="7" y="0.00" width="2.4" height="2.4" fill="#b4b4b4"/><rect x="0" y="6.75" width="2.4" height="2.4" fill="#b4b4b4"/><rect x="7" y="6.75" width="2.4" height="2.4" fill="#b4b4b4"/><rect x="0" y="13.50" width="2.4" height="2.4" fill="#b4b4b4"/><rect x="7" y="13.50" width="2.4" height="2.4" fill="#b4b4b4"/><rect x="0" y="20.25" width="2.4" height="2.4" fill="#b4b4b4"/><rect x="7" y="20.25" width="2.4" height="2.4" fill="#b4b4b4"/><rect x="0" y="27.00" width="2.4" height="2.4" fill="#b4b4b4"/><rect x="7" y="27.00" width="2.4" height="2.4" fill="#b4b4b4"/><rect x="0" y="33.75" width="2.4" height="2.4" fill="#b4b4b4"/><rect x="7" y="33.75" width="2.4" height="2.4" fill="#b4b4b4"/></svg>
<svg class="a" style="left:2826px;top:277px" width="34" height="40" viewBox="0 0 34 40"><path d="M9.4 16.3L25.4 1L32.9 8.2L17.3 23.9Z" fill="#4a4a4a" /><path d="M1.6 24.5L4.3 21.4L12.1 29.3L9.1 32Z" fill="#4a4a4a" /><circle cx="2.5" cy="37.7" r="2.6" fill="#4a4a4a"/><circle cx="11.5" cy="37.7" r="2.6" fill="#4a4a4a"/><circle cx="20.6" cy="37.7" r="2.6" fill="#4a4a4a"/></svg>
<svg class="a" style="left:2891px;top:289px" width="14" height="20" viewBox="0 0 14 20"><path d="M3.2 3.4L10.7 10.3L3.2 17.6" fill="none" stroke="#333" stroke-width="2.2" /></svg>
<div class="t" style="left:1632.0px;top:198px;font-size:30px;line-height:30px;letter-spacing:-5.000px;">1</div>
<div class="t" style="left:1827.0px;top:198px;font-size:30px;line-height:30px;letter-spacing:1.500px;">/ 2</div>
<div class="a" style="left:71px;top:349px;width:485px;height:69px;background:#fafafa;border:2px solid #b4b4b4;border-bottom:none;border-radius:6px 6px 0 0;box-sizing:border-box;"></div>
<div class="t" style="left:101.0px;top:372px;font-size:30px;line-height:30px;letter-spacing:0.739px;">*Результат сравнения.pdf</div>
<svg class="a" style="left:490px;top:371px" width="28" height="28" viewBox="0 0 28 28"><circle cx="14" cy="14" r="13.5" fill="#dc3a4c"/><path d="M9.2 9.2L18.8 18.8M18.8 9.2L9.2 18.8" stroke="#fff" stroke-width="2.8" stroke-linecap="round"/></svg>
<div class="a" style="left:555px;top:415px;width:2355px;height:2px;background:#acacac;"></div>
<div class="a" style="left:70px;top:417px;width:1px;height:1453px;background:#b0b0b0;"></div>
<div class="a" style="left:2908px;top:415px;width:2px;height:1455px;background:#b4b4b4;"></div>
<div class="a" style="left:70px;top:1868px;width:2840px;height:2px;background:#b4b4b4;"></div>
<div class="a" style="left:72px;top:417px;width:2836px;height:1451px;background:#fafafa;"></div>
<div class="a" style="left:132px;top:418px;width:2px;height:1450px;background:#c6c6c6;"></div>
<div class="t" style="left:157.0px;top:458px;font-size:30px;line-height:30px;letter-spacing:1.200px;">Комментарии</div>
<svg class="a" style="left:556px;top:454px" width="46" height="40" viewBox="0 0 46 40"><circle cx="18.5" cy="17" r="15.3" fill="none" stroke="#4a4a4a" stroke-width="2.2"/><path d="M11.5 11.5H25.5M11.5 17H25.5M11.5 22.5H25.5" stroke="#4a4a4a" stroke-width="2.4"/><path d="M30 33.6H43.5L36.75 38.5Z" fill="#4a4a4a"/></svg>
<div class="a" style="left:157px;top:515px;width:447px;height:1333px;background:#fff;border:2px solid #c8c8c8;box-sizing:border-box;"></div>
<div class="a" style="left:159px;top:517px;width:443px;height:47px;background:linear-gradient(#fcfcfc,#ebebeb);"></div>
<div class="a" style="left:159px;top:563px;width:443px;height:3px;background:#b8b8b8;"></div>
<div class="t" style="left:164.0px;top:529px;font-size:30px;line-height:30px;letter-spacing:1.100px;">Комментарий</div>
<div class="a" style="left:159px;top:566px;width:443px;height:42px;background:#fff;"></div>
<svg class="a" style="left:174px;top:583px" width="18" height="10" viewBox="0 0 18 10"><path d="M0 0H17.6L8.8 9.5Z" fill="#555"/></svg>
<div class="t" style="left:212.0px;top:574px;font-size:30px;line-height:30px;letter-spacing:-0.131px;">Страница 1 (4)</div>
<div class="a" style="left:159px;top:608px;width:443px;height:85px;background:#f5f5f5;"></div>
<div class="t" style="left:315.0px;top:616px;font-size:30px;line-height:30px;letter-spacing:-0.300px;">Текст удален - Рез...</div>
<div class="t" style="left:315.0px;top:657px;font-size:30px;line-height:30px;letter-spacing:-0.029px;">14 янв. 2026 12:29</div>
<svg class="a" style="left:262px;top:636px" width="33" height="29" viewBox="0 0 33 29"><path d="M17 0.2H32L14.3 19.4L7 12.1Z" fill="#5e5e5e"/><path d="M4.8 14L11.7 21.9L5.7 23.8L0.3 27L4.8 20.6Z" fill="#4a4a4a"/><defs><linearGradient id="rl" x1="0" x2="1"><stop offset="0" stop-color="#333"/><stop offset="0.3" stop-color="#ff0000"/><stop offset="1" stop-color="#ff0000"/></linearGradient></defs><path d="M0.3 26.3H32.5L31 28.3H0.3Z" fill="url(#rl)"/></svg>
<div class="t" style="left:315.0px;top:701px;font-size:30px;line-height:30px;letter-spacing:-0.300px;">Текст удален - Рез...</div>
<div class="t" style="left:315.0px;top:742px;font-size:30px;line-height:30px;letter-spacing:-0.029px;">14 янв. 2026 12:29</div>
<svg class="a" style="left:262px;top:721px" width="33" height="29" viewBox="0 0 33 29"><path d="M17 0.2H32L14.3 19.4L7 12.1Z" fill="#5e5e5e"/><path d="M4.8 14L11.7 21.9L5.7 23.8L0.3 27L4.8 20.6Z" fill="#4a4a4a"/><defs><linearGradient id="rl" x1="0" x2="1"><stop offset="0" stop-color="#333"/><stop offset="0.3" stop-color="#ff0000"/><stop offset="1" stop-color="#ff0000"/></linearGradient></defs><path d="M0.3 26.3H32.5L31 28.3H0.3Z" fill="url(#rl)"/></svg>
<div class="a" style="left:159px;top:779px;width:443px;height:85px;background:#f5f5f5;"></div>
<div class="t" style="left:315.0px;top:787px;font-size:30px;line-height:30px;letter-spacing:-0.300px;">Текст удален - Рез...</div>
<div class="t" style="left:315.0px;top:828px;font-size:30px;line-height:30px;letter-spacing:-0.029px;">14 янв. 2026 12:29</div>
<svg class="a" style="left:262px;top:807px" width="33" height="29" viewBox="0 0 33 29"><path d="M17 0.2H32L14.3 19.4L7 12.1Z" fill="#5e5e5e"/><path d="M4.8 14L11.7 21.9L5.7 23.8L0.3 27L4.8 20.6Z" fill="#4a4a4a"/><defs><linearGradient id="rl" x1="0" x2="1"><stop offset="0" stop-color="#333"/><stop offset="0.3" stop-color="#ff0000"/><stop offset="1" stop-color="#ff0000"/></linearGradient></defs><path d="M0.3 26.3H32.5L31 28.3H0.3Z" fill="url(#rl)"/></svg>
<div class="t" style="left:315.0px;top:872px;font-size:30px;line-height:30px;letter-spacing:0.042px;">Текст изменен - Р...</div>
<div class="t" style="left:315.0px;top:913px;font-size:30px;line-height:30px;letter-spacing:-0.029px;">14 янв. 2026 12:29</div>
<svg class="a" style="left:262px;top:892px" width="33" height="29" viewBox="0 0 33 29"><path d="M17 0.2H32L14.3 19.4L7 12.1Z" fill="#5e5e5e"/><path d="M4.8 14L11.7 21.9L5.7 23.8L0.3 27L4.8 20.6Z" fill="#4a4a4a"/><defs><linearGradient id="rl" x1="0" x2="1"><stop offset="0" stop-color="#333"/><stop offset="0.3" stop-color="#ff0000"/><stop offset="1" stop-color="#ff0000"/></linearGradient></defs><path d="M0.3 26.3H32.5L31 28.3H0.3Z" fill="url(#rl)"/></svg>
<div class="a" style="left:159px;top:950px;width:443px;height:40px;background:#f5f5f5;"></div>
<svg class="a" style="left:174px;top:964px" width="18" height="10" viewBox="0 0 18 10"><path d="M0 0H17.6L8.8 9.5Z" fill="#555"/></svg>
<div class="t" style="left:212.0px;top:957px;font-size:30px;line-height:30px;letter-spacing:-0.131px;">Страница 2 (3)</div>
<div class="t" style="left:315.0px;top:998px;font-size:30px;line-height:30px;letter-spacing:-0.150px;">Текст добавлен - Р...</div>
<div class="t" style="left:315.0px;top:1039px;font-size:30px;line-height:30px;letter-spacing:-0.029px;">14 янв. 2026 12:29</div>
<svg class="a" style="left:262px;top:1018px" width="33" height="29" viewBox="0 0 33 29"><path d="M17 0.2H32L14.3 19.4L7 12.1Z" fill="#5e5e5e"/><path d="M4.8 14L11.7 21.9L5.7 23.8L0.3 27L4.8 20.6Z" fill="#4a4a4a"/><defs><linearGradient id="rl" x1="0" x2="1"><stop offset="0" stop-color="#333"/><stop offset="0.3" stop-color="#ff0000"/><stop offset="1" stop-color="#ff0000"/></linearGradient></defs><path d="M0.3 26.3H32.5L31 28.3H0.3Z" fill="url(#rl)"/></svg>
<div class="a" style="left:159px;top:1076px;width:443px;height:85px;background:#f5f5f5;"></div>
<div class="t" style="left:315.0px;top:1084px;font-size:30px;line-height:30px;letter-spacing:-0.150px;">Текст добавлен - Р...</div>
<div class="t" style="left:315.0px;top:1125px;font-size:30px;line-height:30px;letter-spacing:-0.029px;">14 янв. 2026 12:29</div>
<svg class="a" style="left:262px;top:1104px" width="33" height="29" viewBox="0 0 33 29"><path d="M17 0.2H32L14.3 19.4L7 12.1Z" fill="#5e5e5e"/><path d="M4.8 14L11.7 21.9L5.7 23.8L0.3 27L4.8 20.6Z" fill="#4a4a4a"/><defs><linearGradient id="rl" x1="0" x2="1"><stop offset="0" stop-color="#333"/><stop offset="0.3" stop-color="#ff0000"/><stop offset="1" stop-color="#ff0000"/></linearGradient></defs><path d="M0.3 26.3H32.5L31 28.3H0.3Z" fill="url(#rl)"/></svg>
<div class="t" style="left:315.0px;top:1169px;font-size:30px;line-height:30px;letter-spacing:0.042px;">Текст изменен - Р...</div>
<div class="t" style="left:315.0px;top:1210px;font-size:30px;line-height:30px;letter-spacing:-0.029px;">14 янв. 2026 12:29</div>
<svg class="a" style="left:262px;top:1189px" width="33" height="29" viewBox="0 0 33 29"><path d="M17 0.2H32L14.3 19.4L7 12.1Z" fill="#5e5e5e"/><path d="M4.8 14L11.7 21.9L5.7 23.8L0.3 27L4.8 20.6Z" fill="#4a4a4a"/><defs><linearGradient id="rl" x1="0" x2="1"><stop offset="0" stop-color="#333"/><stop offset="0.3" stop-color="#ff0000"/><stop offset="1" stop-color="#ff0000"/></linearGradient></defs><path d="M0.3 26.3H32.5L31 28.3H0.3Z" fill="url(#rl)"/></svg>
<div class="a" style="left:159px;top:1815px;width:443px;height:31px;background:linear-gradient(#fdfdfd,#ececec);border-top:2px solid #d4d4d4;box-sizing:border-box;"></div>
<div class="a" style="left:437px;top:1817px;width:134px;height:29px;background:#e3e3e3;border-left:2px solid #cfcfcf;border-right:2px solid #cfcfcf;box-sizing:border-box;"></div>
<div class="a" style="left:188px;top:1817px;width:2px;height:29px;background:#d0d0d0;"></div>
<svg class="a" style="left:169px;top:1822px" width="10" height="19" viewBox="0 0 10 19"><path d="M9.5 0V18.5L0 9.25Z" fill="#555"/></svg>
<svg class="a" style="left:583px;top:1822px" width="10" height="19" viewBox="0 0 10 19"><path d="M0 0V18.5L9.5 9.25Z" fill="#555"/></svg>
<div class="a" style="left:79px;top:421px;width:55px;height:111px;background:#ebebeb;border:2px solid #d0d0d0;border-right:none;border-bottom:3px solid #c2c2c2;border-radius:7px 0 0 7px;box-sizing:border-box;"></div>
<div class="a" style="left:79px;top:535px;width:55px;height:110px;background:#ebebeb;border:2px solid #d0d0d0;border-right:none;border-bottom:3px solid #c2c2c2;border-radius:7px 0 0 7px;box-sizing:border-box;"></div>
<div class="a" style="left:79px;top:647px;width:55px;height:110px;background:#ebebeb;border:2px solid #d0d0d0;border-right:none;border-bottom:3px solid #c2c2c2;border-radius:7px 0 0 7px;box-sizing:border-box;"></div>
<div class="a" style="left:79px;top:759px;width:55px;height:110px;background:#ebebeb;border:2px solid #d0d0d0;border-right:none;border-bottom:3px solid #c2c2c2;border-radius:7px 0 0 7px;box-sizing:border-box;"></div>
<div class="a" style="left:74px;top:872px;width:62px;height:110px;background:linear-gradient(90deg,#fff,#f8f8f8);border:2px solid #c4c4c4;border-right:none;border-radius:7px 0 0 7px;box-sizing:border-box;"></div>
<div class="a" style="left:79px;top:985px;width:55px;height:109px;background:#ebebeb;border:2px solid #d0d0d0;border-right:none;border-bottom:3px solid #c2c2c2;border-radius:7px 0 0 7px;box-sizing:border-box;"></div>
<div class="a" style="left:79px;top:1097px;width:55px;height:111px;background:#ebebeb;border:2px solid #d0d0d0;border-right:none;border-bottom:3px solid #c2c2c2;border-radius:7px 0 0 7px;box-sizing:border-box;"></div>
<svg class="a" style="left:89px;top:462px" width="32" height="38" viewBox="0 0 32 38"><path d="M1.1 1.1H29.4V24L21 35.7H1.1Z" fill="none" stroke="#4a4a4a" stroke-width="2.2" /><path d="M29.4 24H21V35.7" fill="none" stroke="#4a4a4a" stroke-width="2.2" /><path d="M22 25H28.5L22 33.5Z" fill="#fff" /></svg>
<svg class="a" style="left:94px;top:575px" width="25" height="39" viewBox="0 0 25 39"><path d="M1.1 1.1H22.9V36.5L12 29.8L1.1 36.5Z" fill="none" stroke="#4a4a4a" stroke-width="2.2" /></svg>
<svg class="a" style="left:96px;top:686px" width="20" height="40" viewBox="0 0 20 40"><path d="M2 28.8V8.2A7.9 7.9 0 0 1 17.8 8.2V33.6A5.55 5.55 0 0 1 6.7 33.6V11.7A3.4 3.4 0 0 1 13.5 11.7V29.4" fill="none" stroke="#4a4a4a" stroke-width="2.2" /></svg>
<svg class="a" style="left:88px;top:802px" width="36" height="36" viewBox="0 0 36 36"><circle cx="14.7" cy="13.5" r="11.5" fill="none" stroke="#4a4a4a" stroke-width="2.4"/><path d="M23 22L33 32.2" fill="none" stroke="#4a4a4a" stroke-width="2.6" /></svg>
<svg class="a" style="left:85px;top:914px" width="35" height="34" viewBox="0 0 35 34"><path d="M1.3 1.9H23V8.6H1.3Z M6.4 8.6V29.5H16.2M6.4 19H16.2 M16.2 15.5H32.6V21H16.2Z M16.2 27H32.6V32.4H16.2Z" fill="none" stroke="#4a4a4a" stroke-width="2.2" /></svg>
<svg class="a" style="left:87px;top:1029px" width="38" height="29" viewBox="0 0 38 29"><path d="M1.4 1.4H36.5V27.5H1.4Z" fill="none" stroke="#4a4a4a" stroke-width="2.2" /><path d="M5.5 13.3H15.2V20.3H5.5Z" fill="#4a4a4a" /><path d="M7.6 13.5V10.3C7.6 6.5 13.1 6.5 13.1 10.3V13.5" fill="none" stroke="#4a4a4a" stroke-width="2" /><path d="M18.5 8.2H32M18.5 13.3H30M18.5 18.5H27.5" fill="none" stroke="#4a4a4a" stroke-width="2.2" /></svg>
<svg class="a" style="left:87px;top:1139px" width="38" height="36" viewBox="0 0 38 36"><path d="M1.4 14.3L18.7 1.5L36 14.3L18.7 27Z" fill="none" stroke="#4a4a4a" stroke-width="2.2" /><path d="M5.5 20L1.4 23L18.7 34L36 23L32 20" fill="none" stroke="#4a4a4a" stroke-width="2.2" /></svg>
<div class="a" style="left:634px;top:421px;width:2197px;height:1415px;background:#fff;"></div>
<div class="a" style="left:634px;top:421px;width:2197px;height:1px;background:#b8b8b8;"></div>
<div class="a" style="left:634px;top:421px;width:1px;height:1415px;background:#bcbcbc;"></div>
<div class="a" style="left:1735px;top:422px;width:2px;height:1413px;background:#a8a8a8;"></div>
<div class="t" style="left:885.6px;top:497px;font-size:67px;line-height:67px;font-weight:700;transform:scaleX(0.9681);transform-origin:4px 0;">Николай Карамзин</div>
<div class="a" style="left:1089px;top:579px;width:195px;height:54px;background:#ff5f5f;"></div>
<div class="t" style="left:1089.0px;top:574px;font-size:67px;line-height:67px;font-weight:700;transform:scaleX(0.9692);transform-origin:2px 0;">Стихи</div>
<div class="t" style="left:1077.0px;top:744px;font-size:67px;line-height:67px;font-weight:700;transform:scaleX(0.9170);transform-origin:4px 0;">Поэзия</div>
<div class="a" style="left:694px;top:858px;width:418px;height:47px;background:#6aaef0;"></div>
<div class="t" style="left:694.0px;top:858px;font-size:42px;line-height:42px;font-style:italic;transform:scaleX(1.0404);transform-origin:2px 0;">(Сочинена в 1688 г.)</div>
<div class="t" style="left:965.0px;top:910px;font-size:36px;line-height:36px;font-style:italic;transform:scaleX(0.9707);transform-origin:1px 0;">Die Lieder der göttlichen Harfenspieler</div>
<div class="t" style="left:966.0px;top:951px;font-size:36px;line-height:36px;font-style:italic;transform:scaleX(0.9736);transform-origin:0px 0;">schallen mit Macht, wie beseelend.</div>
<div class="t" style="left:917.2px;top:997px;font-size:33px;line-height:33px;font-weight:700;font-style:italic;transform:scaleX(0.9331);transform-origin:0px 0;">Klopstok</div>
<div class="t" style="left:1054.0px;top:994px;font-size:26px;line-height:26px;font-style:italic;transform:scaleX(0.9069);transform-origin:0px 0;">12</div>
<div class="t" style="left:754.0px;top:1134px;font-size:41px;line-height:41px;transform:scaleX(0.9517);transform-origin:3px 0;">Едва был создан мир огромный, велелепный,</div>
<div class="t" style="left:755.0px;top:1181px;font-size:41px;line-height:41px;transform:scaleX(0.9488);transform-origin:2px 0;">Явился человек, прекраснейшая тварь,</div>
<div class="t" style="left:754.0px;top:1228px;font-size:41px;line-height:41px;transform:scaleX(0.9498);transform-origin:3px 0;">Предмет любви творца, любовию рожденный;</div>
<div class="t" style="left:755.0px;top:1275px;font-size:41px;line-height:41px;transform:scaleX(0.9492);transform-origin:2px 0;">Явился – весь сей мир приветствует его,</div>
<div class="t" style="left:754.0px;top:1321px;font-size:41px;line-height:41px;transform:scaleX(0.9512);transform-origin:3px 0;">В восторге и любви, единою улыбкой.</div>
<div class="t" style="left:756.0px;top:1368px;font-size:41px;line-height:41px;transform:scaleX(0.9494);transform-origin:1px 0;">Узрев собор красот и <i>чувствуя</i> себя,</div>
<div class="t" style="left:755.0px;top:1415px;font-size:41px;line-height:41px;transform:scaleX(0.9486);transform-origin:2px 0;">Сей гордый мира царь почувствовал и бога,</div>
<div class="t" style="left:754.0px;top:1462px;font-size:41px;line-height:41px;transform:scaleX(0.9498);transform-origin:3px 0;">Причину бытия – толь живо ощутил</div>
<div class="t" style="left:754.0px;top:1509px;font-size:41px;line-height:41px;transform:scaleX(0.9505);transform-origin:3px 0;">Величие творца, его премудрость, благость,</div>
<div class="t" style="left:754.0px;top:1556px;font-size:41px;line-height:41px;transform:scaleX(0.9504);transform-origin:3px 0;">Что сердце у него в гимн нежный излилось,</div>
<div class="a" style="left:647px;top:1631px;width:323px;height:2px;background:#666;"></div>
<div class="t" style="left:671.0px;top:1644px;font-size:24px;line-height:24px;">1</div>
<div class="t" style="left:699.0px;top:1653px;font-size:33px;line-height:33px;word-spacing:11.701px;transform:scaleX(0.9610);transform-origin:2px 0;">Песни божественных арфистов звучат с силой одухотворяющей.</div>
<div class="t" style="left:645.0px;top:1692px;font-size:33px;line-height:33px;transform:scaleX(0.9933);transform-origin:2px 0;">Клопшток <i>(нем.). – Ред</i>.</div>
<div class="t" style="left:670.0px;top:1732px;font-size:24px;line-height:24px;">2</div>
<div class="a" style="left:681px;top:1741px;width:1048px;height:38px;background:#ff5f5f;"></div>
<div class="a" style="left:647px;top:1781px;width:368px;height:37px;background:#ff5f5f;"></div>
<div class="t" style="left:701.0px;top:1742px;font-size:33px;line-height:33px;word-spacing:13.354px;transform:scaleX(0.9610);transform-origin:2px 0;">Эпиграф принадлежит перу немецкого поэта Фродриха Готлиба</div>
<div class="t" style="left:645.0px;top:1782px;font-size:33px;line-height:33px;transform:scaleX(0.9892);transform-origin:2px 0;">Клопштока (1724–1803).</div>
<div class="a" style="left:1737px;top:419px;width:1062px;height:1417px;overflow:hidden"><div class="a" style="left:-1737px;top:-419px;width:2980px;height:2026px">
<div class="t" style="left:1985.6px;top:497px;font-size:67px;line-height:67px;font-weight:700;transform:scaleX(0.9681);transform-origin:4px 0;">Николай Карамзин</div>
<div class="t" style="left:2177.0px;top:744px;font-size:67px;line-height:67px;font-weight:700;transform:scaleX(0.9170);transform-origin:4px 0;">Поэзия</div>
<div class="a" style="left:1794px;top:858px;width:418px;height:47px;background:#6aaef0;"></div>
<div class="t" style="left:1794.0px;top:858px;font-size:42px;line-height:42px;font-style:italic;transform:scaleX(1.0404);transform-origin:2px 0;">(Сочинена в 1787 г.)</div>
<div class="t" style="left:2065.0px;top:910px;font-size:36px;line-height:36px;font-style:italic;transform:scaleX(0.9707);transform-origin:1px 0;">Die Lieder der göttlichen Harfenspieler</div>
<div class="t" style="left:2066.0px;top:951px;font-size:36px;line-height:36px;font-style:italic;transform:scaleX(0.9736);transform-origin:0px 0;">schallen mit Macht, wie beseelend.</div>
<div class="a" style="left:1868px;top:997px;width:142px;height:31px;background:#59f77a;"></div>
<div class="t" style="left:1872.0px;top:997px;font-size:33px;line-height:33px;font-weight:700;font-style:italic;transform:scaleX(0.9429);transform-origin:0px 0;">Friedrich</div>
<div class="t" style="left:2017.2px;top:997px;font-size:33px;line-height:33px;font-weight:700;font-style:italic;transform:scaleX(0.9331);transform-origin:0px 0;">Klopstok</div>
<div class="t" style="left:2154.0px;top:994px;font-size:26px;line-height:26px;font-style:italic;transform:scaleX(0.9069);transform-origin:0px 0;">12</div>
<div class="t" style="left:1854.0px;top:1134px;font-size:41px;line-height:41px;transform:scaleX(0.9517);transform-origin:3px 0;">Едва был создан мир огромный, велелепный,</div>
<div class="t" style="left:1855.0px;top:1181px;font-size:41px;line-height:41px;transform:scaleX(0.9488);transform-origin:2px 0;">Явился человек, прекраснейшая тварь,</div>
<div class="t" style="left:1854.0px;top:1228px;font-size:41px;line-height:41px;transform:scaleX(0.9498);transform-origin:3px 0;">Предмет любви творца, любовию рожденный;</div>
<div class="t" style="left:1855.0px;top:1275px;font-size:41px;line-height:41px;transform:scaleX(0.9492);transform-origin:2px 0;">Явился – весь сей мир приветствует его,</div>
<div class="t" style="left:1854.0px;top:1321px;font-size:41px;line-height:41px;transform:scaleX(0.9512);transform-origin:3px 0;">В восторге и любви, единою улыбкой.</div>
<div class="t" style="left:1856.0px;top:1368px;font-size:41px;line-height:41px;transform:scaleX(0.9494);transform-origin:1px 0;">Узрев собор красот и <i>чувствуя</i> себя,</div>
<div class="t" style="left:1855.0px;top:1415px;font-size:41px;line-height:41px;transform:scaleX(0.9486);transform-origin:2px 0;">Сей гордый мира царь почувствовал и бога,</div>
<div class="t" style="left:1854.0px;top:1462px;font-size:41px;line-height:41px;transform:scaleX(0.9498);transform-origin:3px 0;">Причину бытия – толь живо ощутил</div>
<div class="t" style="left:1854.0px;top:1509px;font-size:41px;line-height:41px;transform:scaleX(0.9505);transform-origin:3px 0;">Величие творца, его премудрость, благость,</div>
<div class="t" style="left:1854.0px;top:1556px;font-size:41px;line-height:41px;transform:scaleX(0.9504);transform-origin:3px 0;">Что сердце у него в гимн нежный излилось,</div>
<div class="a" style="left:1747px;top:1631px;width:323px;height:2px;background:#666;"></div>
<div class="t" style="left:1771.0px;top:1644px;font-size:24px;line-height:24px;">1</div>
<div class="t" style="left:1799.0px;top:1653px;font-size:33px;line-height:33px;word-spacing:11.701px;transform:scaleX(0.9610);transform-origin:2px 0;">Песни божественных арфистов звучат с силой одухотворяющей.</div>
<div class="t" style="left:1745.0px;top:1692px;font-size:33px;line-height:33px;transform:scaleX(0.9933);transform-origin:2px 0;">Клопшток <i>(нем.). – Ред</i>.</div>
<div class="t" style="left:1770.0px;top:1732px;font-size:24px;line-height:24px;">2</div>
<div class="a" style="left:1780px;top:1741px;width:927px;height:81px;background:#5bfa7d;"></div>
<div class="t" style="left:1794.0px;top:1743px;font-size:33px;line-height:33px;transform:scaleX(0.9859);transform-origin:0px 0;">Автор эпиграфа – немецкий поэт Фридрих Готлиб Клопшток</div>
<div class="t" style="left:1781.0px;top:1786px;font-size:33px;line-height:33px;transform:scaleX(0.9979);transform-origin:2px 0;">(1724–1803).</div>
<svg class="a" style="left:1869px;top:989px" width="142" height="47" viewBox="0 0 142 47"><defs><pattern id="ck" width="6" height="6" patternUnits="userSpaceOnUse"><rect width="3" height="3" fill="#3d7fe3"/><rect x="3" y="3" width="3" height="3" fill="#3d7fe3"/></pattern></defs><path d="M7 1H133V8H141V39H133V45.5H7V39H0.6V8H7Z M7 8V39H133V8Z" fill="url(#ck)" fill-rule="evenodd"/></svg>
</div></div>
<div class="a" style="left:2799px;top:422px;width:32px;height:1414px;background:linear-gradient(90deg,#fcfcfc,#ececec);border-left:1px solid #c4c4c4;border-right:1px solid #c4c4c4;box-sizing:border-box;"></div>
<div class="a" style="left:2800px;top:451px;width:30px;height:2px;background:#c0c0c0;"></div>
<div class="a" style="left:2800px;top:455px;width:30px;height:1px;background:#c4c4c4;"></div>
<svg class="a" style="left:2806px;top:432px" width="18" height="10" viewBox="0 0 18 10"><path d="M0 9.5H17.5L8.75 0Z" fill="#555"/></svg>
<div class="a" style="left:2800px;top:1803px;width:30px;height:2px;background:#b8b8b8;"></div>
<svg class="a" style="left:2806px;top:1815px" width="18" height="10" viewBox="0 0 18 10"><path d="M0 0H17.5L8.75 9.5Z" fill="#555"/></svg>
<div class="a" style="left:636px;top:1834px;width:2163px;height:34px;background:linear-gradient(#fdfdfd,#ececec);border-top:2px solid #a0a0a0;box-sizing:border-box;"></div>
<div class="a" style="left:665px;top:1837px;width:2px;height:31px;background:#cfcfcf;"></div>
<svg class="a" style="left:646px;top:1843px" width="10" height="18" viewBox="0 0 10 18"><path d="M9 0V17.5L0 8.75Z" fill="#555"/></svg>
<div class="a" style="left:2727px;top:1837px;width:41px;height:31px;background:#e3e3e3;border-left:2px solid #cfcfcf;border-right:2px solid #cfcfcf;box-sizing:border-box;"></div>
<svg class="a" style="left:2780px;top:1843px" width="10" height="18" viewBox="0 0 10 18"><path d="M0 0V17.5L9 8.75Z" fill="#555"/></svg>
<div class="a" style="left:2799px;top:1836px;width:32px;height:32px;background:#f6f6f6;border:2px solid #d4d4d4;box-sizing:border-box;"></div>
<div class="a" style="left:2845px;top:532px;width:2px;height:1336px;background:#b8b8b8;"></div>
<div class="a" style="left:2843px;top:421px;width:62px;height:112px;background:#fcfcfc;border:2px solid #b0b0b0;border-left:none;border-radius:0 7px 7px 0;box-sizing:border-box;"></div>
<svg class="a" style="left:2857px;top:452px" width="40" height="42" viewBox="0 0 40 42"><path d="M2 8.5H38M2 33.5H27" stroke="#505050" stroke-width="3"/><circle cx="21" cy="8.5" r="5.5" fill="#505050"/><circle cx="32.5" cy="33.5" r="5" fill="#fff" stroke="#505050" stroke-width="3"/></svg>
<svg class="a" style="left:630px;top:1129px" width="3" height="40" viewBox="0 0 3 40"><rect x="0" y="1.00" width="2.2" height="2.4" fill="#b2b2b2"/><rect x="0" y="7.75" width="2.2" height="2.4" fill="#b2b2b2"/><rect x="0" y="14.50" width="2.2" height="2.4" fill="#b2b2b2"/><rect x="0" y="21.25" width="2.2" height="2.4" fill="#b2b2b2"/><rect x="0" y="28.00" width="2.2" height="2.4" fill="#b2b2b2"/><rect x="0" y="34.75" width="2.2" height="2.4" fill="#b2b2b2"/></svg>
<svg class="a" style="left:2837px;top:1129px" width="3" height="40" viewBox="0 0 3 40"><rect x="0" y="1.00" width="2.2" height="2.4" fill="#b2b2b2"/><rect x="0" y="7.75" width="2.2" height="2.4" fill="#b2b2b2"/><rect x="0" y="14.50" width="2.2" height="2.4" fill="#b2b2b2"/><rect x="0" y="21.25" width="2.2" height="2.4" fill="#b2b2b2"/><rect x="0" y="28.00" width="2.2" height="2.4" fill="#b2b2b2"/><rect x="0" y="34.75" width="2.2" height="2.4" fill="#b2b2b2"/></svg>
<div class="t" style="left:78.0px;top:1900px;font-size:30px;line-height:30px;letter-spacing:1.257px;">Инициалы</div>
<svg class="a" style="left:2887px;top:1920px" width="24" height="24" viewBox="0 0 24 24"><rect x="19.5" y="2" width="2" height="2" fill="#b0b0b0"/><rect x="19.5" y="8" width="2" height="2" fill="#b0b0b0"/><rect x="13" y="8" width="2" height="2" fill="#b0b0b0"/><rect x="19.5" y="14.5" width="2" height="2" fill="#b0b0b0"/><rect x="13" y="14.5" width="2" height="2" fill="#b0b0b0"/><rect x="6.5" y="14.5" width="2" height="2" fill="#b0b0b0"/><rect x="19.5" y="21" width="2" height="2" fill="#b0b0b0"/><rect x="13" y="21" width="2" height="2" fill="#b0b0b0"/><rect x="6.5" y="21" width="2" height="2" fill="#b0b0b0"/><rect x="0" y="21" width="2" height="2" fill="#b0b0b0"/></svg>
<div class="a" style="left:64px;top:117px;width:1px;height:1833px;background:#9a9a9a;"></div>
</body></html>
